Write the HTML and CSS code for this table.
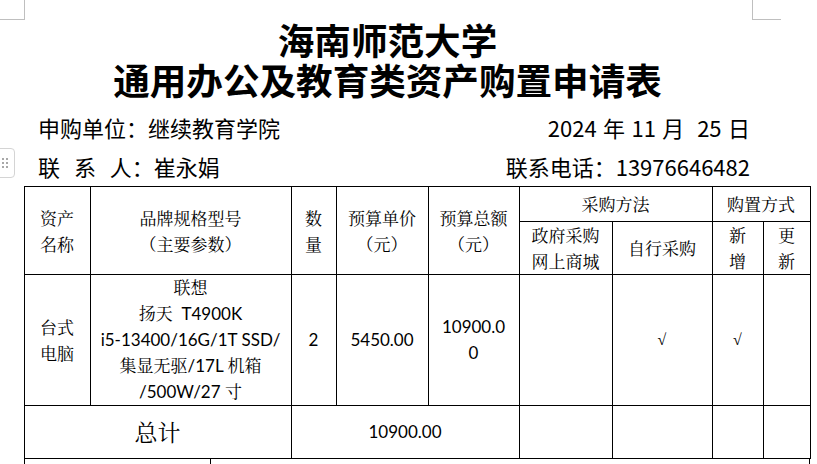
FILE: index.html
```html
<!DOCTYPE html>
<html lang="zh-CN">
<head>
<meta charset="utf-8">
<title>海南师范大学 通用办公及教育类资产购置申请表</title>
<link rel="stylesheet" href="styles.css">
</head>
<body>
<div class="page">
  <div class="marks"><span class="mark mark-l"></span><span class="mark mark-r"></span></div>
  <h1 class="title"><span class="title-line">海南师范大学</span><span class="title-line">通用办公及教育类资产购置申请表</span></h1>
  <div class="info">
    <div class="info-row"><span>申购单位：继续教育学院</span><span class="date">2024 年 11 月&nbsp; 25 日</span></div>
    <div class="info-row"><span><span class="spaced">联 系 人</span>：崔永娟</span><span>联系电话：<span class="num">13976646482</span></span></div>
  </div>
  <div class="table-wrap">
    <span class="handle"><i></i><i></i><i></i><i></i><i></i><i></i></span>
    <table class="form">
      <colgroup>
        <col class="c1"><col class="c2"><col class="c3"><col class="c4"><col class="c5"><col class="c6"><col class="c7"><col class="c8"><col class="c9">
      </colgroup>
      <tr class="r1">
        <td rowspan="2">资产<br>名称</td>
        <td rowspan="2">品牌规格型号<br>（主要参数）</td>
        <td rowspan="2">数<br>量</td>
        <td rowspan="2">预算单价<br>（元）</td>
        <td rowspan="2">预算总额<br>（元）</td>
        <td colspan="2">采购方法</td>
        <td colspan="2">购置方式</td>
      </tr>
      <tr class="r2">
        <td>政府采购<br>网上商城</td>
        <td>自行采购</td>
        <td>新<br>增</td>
        <td>更<br>新</td>
      </tr>
      <tr class="r3">
        <td>台式<br>电脑</td>
        <td class="model">联想<br>扬天&nbsp; T4900K<br>i5-13400/16G/1T SSD/<br>集显无驱/17L 机箱<br>/500W/27 寸</td>
        <td class="latin">2</td>
        <td class="latin">5450.00</td>
        <td class="latin">10900.0<br>0</td>
        <td></td>
        <td class="check">√</td>
        <td class="check">√</td>
        <td></td>
      </tr>
      <tr class="r4">
        <td colspan="2" class="total-label">总计</td>
        <td colspan="3" class="latin">10900.00</td>
        <td></td>
        <td></td>
        <td></td>
        <td></td>
      </tr>
    </table>
    <div class="foot-row"><div class="foot-cell foot-a"></div><div class="foot-cell foot-b"></div></div>
  </div>
</div>
</body>
</html>
```

FILE: styles.css
```css
html, body {
  margin: 0;
  padding: 0;
  background: #ffffff;
}

.page {
  width: 817px;
  height: 464px;
  overflow: hidden;
  color: #000;
  font-family: "Noto Sans CJK SC", "Noto Sans", sans-serif;
}

.marks {
  display: flex;
  justify-content: space-between;
  padding-right: 36px;
  height: 20px;
}

.mark {
  display: block;
  height: 20px;
  box-sizing: border-box;
  border-bottom: 1px solid #bfbfbf;
}

.mark-l {
  width: 25px;
  border-right: 1px solid #bfbfbf;
}

.mark-r {
  width: 29px;
  border-left: 1px solid #bfbfbf;
}

.title {
  margin: 0;
  display: flex;
  flex-direction: column;
  align-items: center;
  font-family: "Noto Sans CJK SC", sans-serif;
  font-weight: 700;
  font-size: 36.6px;
  line-height: 40px;
  padding-right: 42px;
}

.title-line {
  display: block;
  height: 40px;
}

.info {
  margin-top: 8px;
  padding: 0 67px 0 38px;
  font-size: 22px;
  line-height: 39px;
}

.info-row {
  display: flex;
  justify-content: space-between;
  height: 39px;
}

.spaced {
  word-spacing: 9px;
}

.date {
  word-spacing: 1.5px;
}

.table-wrap {
  position: relative;
  padding-left: 23.5px;
}

.handle {
  position: absolute;
  left: -6px;
  top: -38px;
  width: 21px;
  height: 30px;
  box-sizing: border-box;
  border: 1px solid #d4d4d4;
  border-radius: 4px;
  display: grid;
  grid-template-columns: 2px 2px;
  grid-auto-rows: 2px;
  column-gap: 2px;
  row-gap: 2px;
  align-content: center;
  justify-content: end;
  padding-right: 6px;
}

.handle i {
  display: block;
  width: 2px;
  height: 2px;
  background: #a8a8a8;
}

.form {
  border-collapse: collapse;
  table-layout: fixed;
  width: 786px;
  font-family: "Noto Serif CJK SC", "Noto Sans CJK SC", serif;
  font-size: 17px;
  line-height: 26px;
}

.c1 { width: 66px; }
.c2 { width: 201px; }
.c3 { width: 45px; }
.c4 { width: 92px; }
.c5 { width: 91px; }
.c6 { width: 93px; }
.c7 { width: 100px; }
.c8 { width: 51px; }
.c9 { width: 47px; }

.form td {
  border: 1px solid #000;
  padding: 0;
  text-align: center;
  vertical-align: middle;
  overflow: hidden;
}

.r1 { height: 35px; }
.r2 { height: 53px; }
.r3 { height: 131px; }
.r4 { height: 53px; }

.model {
  font-family: "Lato", "Noto Serif CJK SC", "Noto Sans CJK SC", serif;
  font-size: 17px;
  line-height: 26px;
}

.latin {
  font-family: "Lato", "Noto Sans", sans-serif;
  font-size: 17px;
}

.check {
  font-family: "Liberation Serif", serif;
  font-size: 16px;
}

.total-label {
  font-size: 23px;
}

.foot-row {
  display: flex;
  width: 786px;
  height: 20px;
}

.foot-cell {
  box-sizing: border-box;
  border-left: 1px solid #000;
  height: 20px;
}

.foot-a {
  width: 186px;
}

.foot-b {
  flex: 1;
  border-right: 1px solid #000;
}
```
